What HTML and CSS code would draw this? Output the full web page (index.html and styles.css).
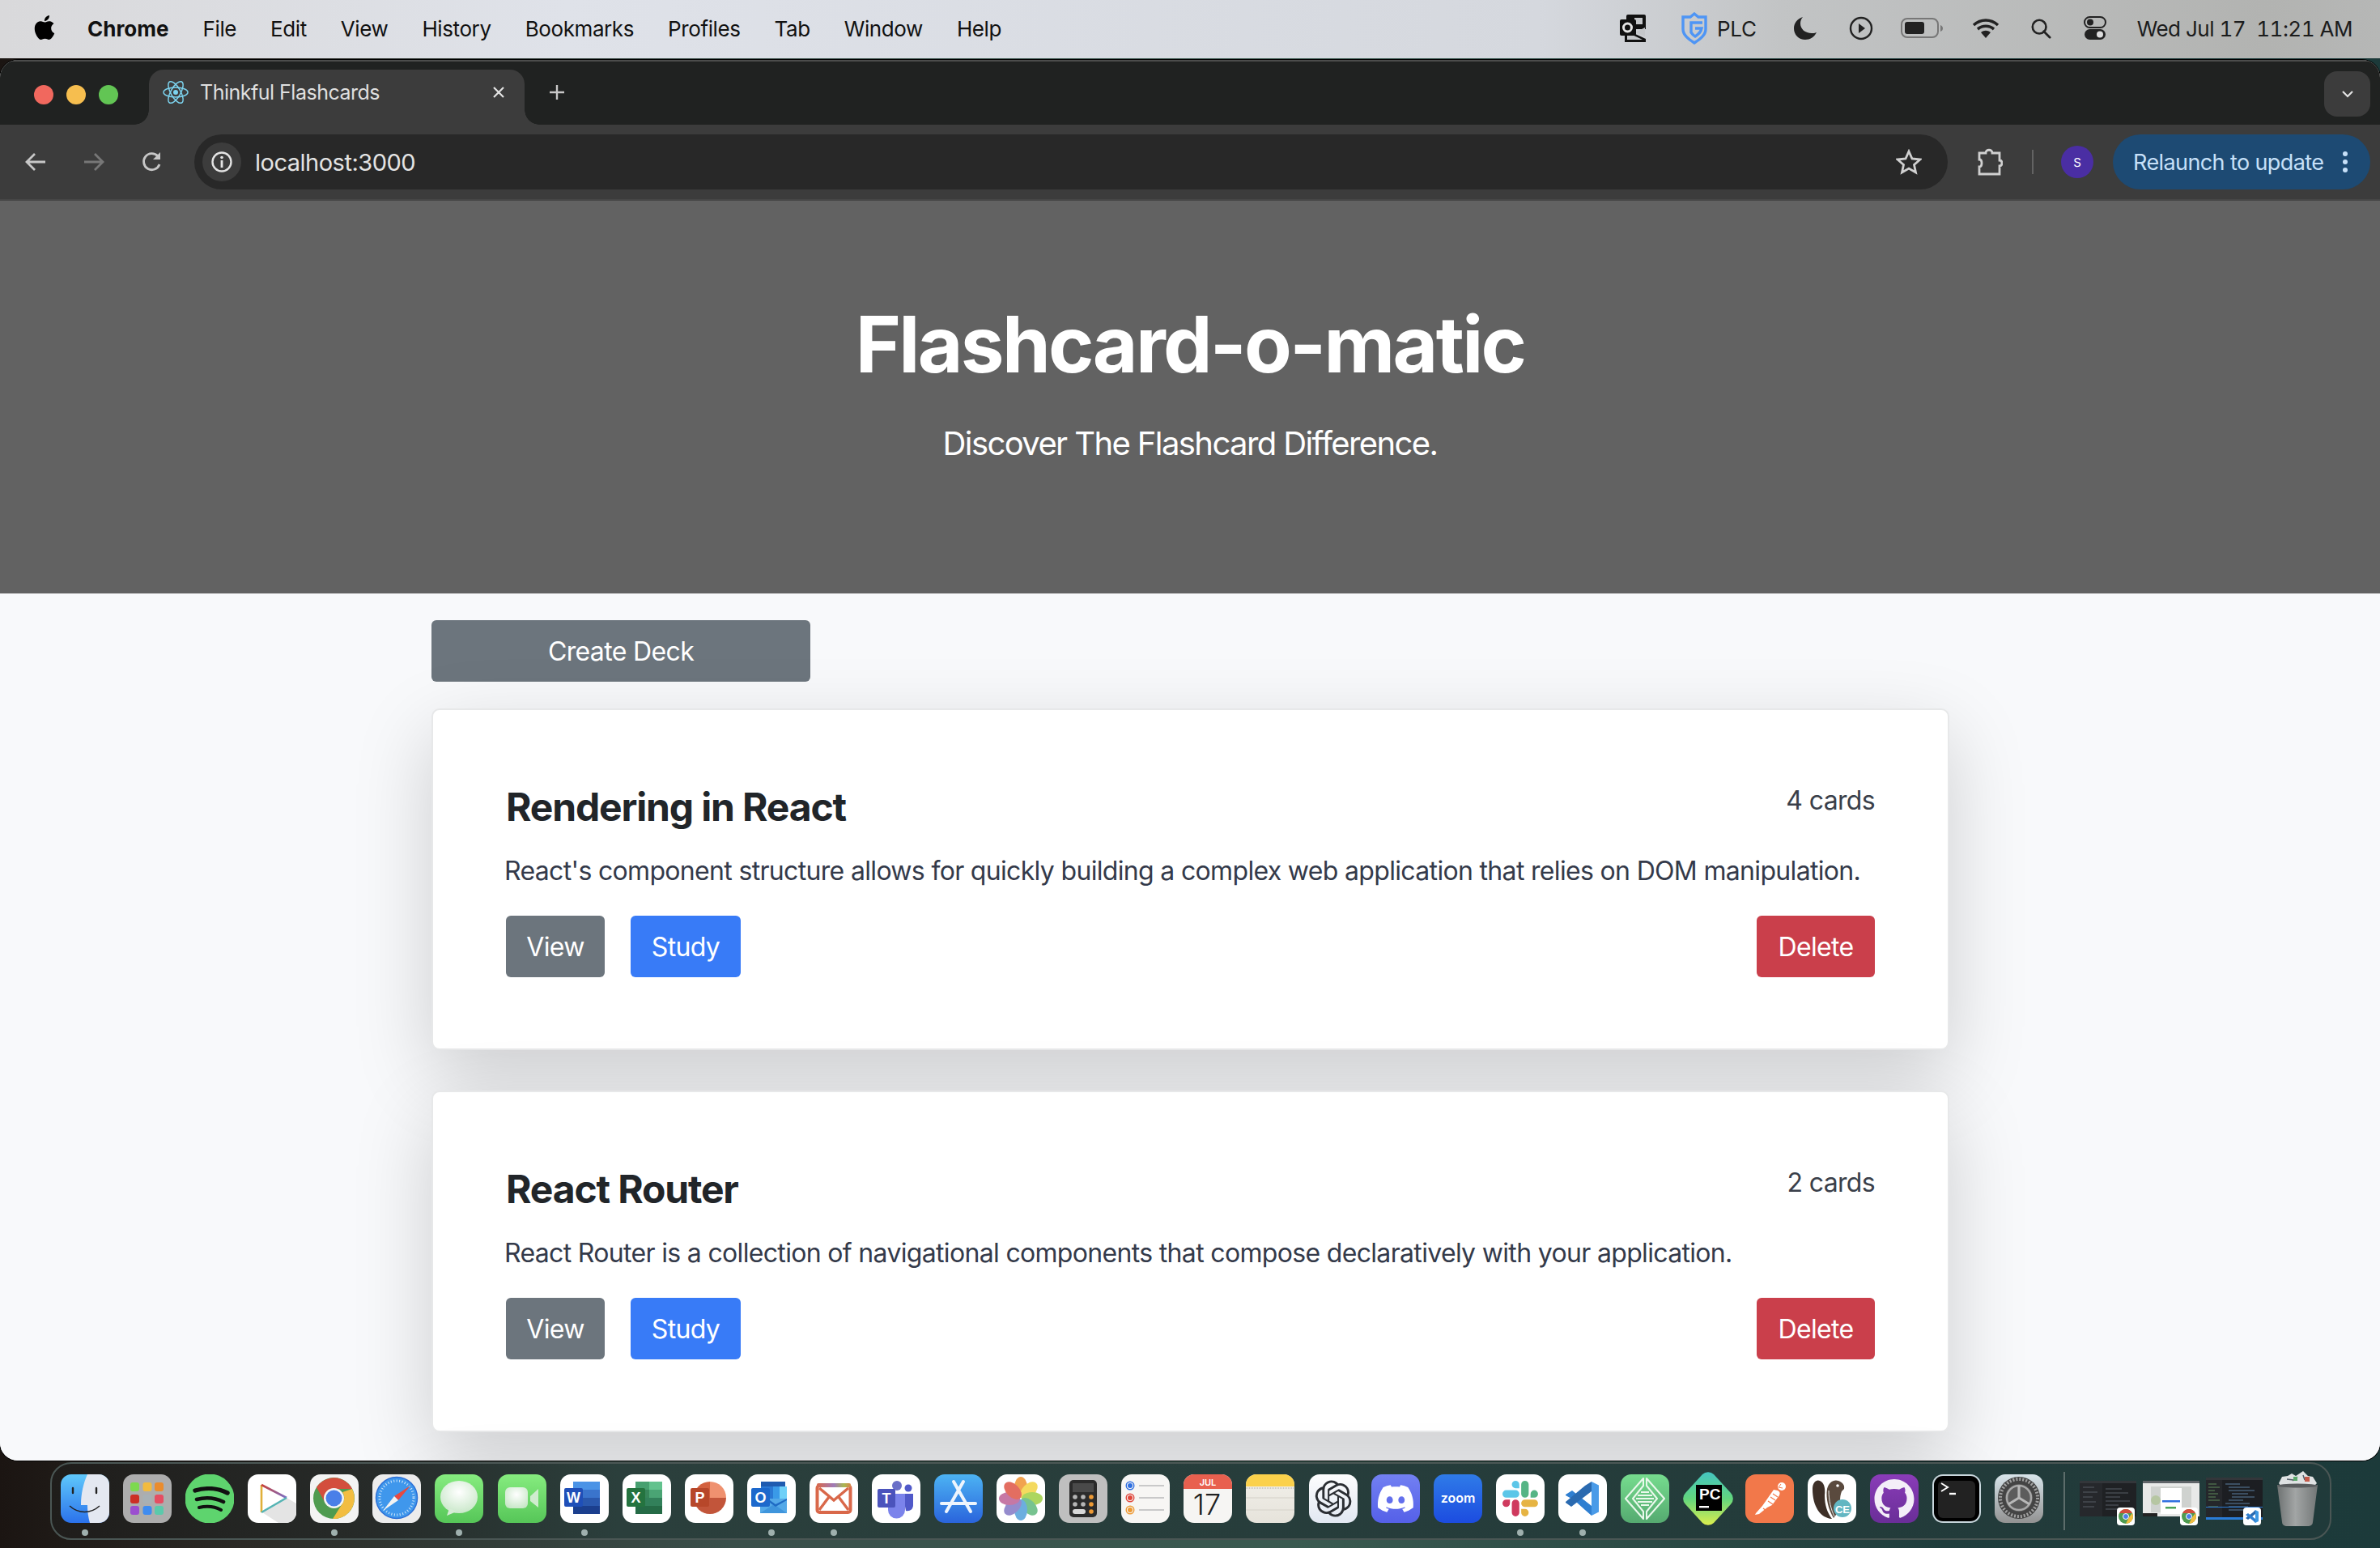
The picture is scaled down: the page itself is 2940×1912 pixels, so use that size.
FILE: index.html
```html
<!DOCTYPE html>
<html lang="en">
<head>
    <meta charset="UTF-8">
    <title>Thinkful Flashcards</title>
    <link rel="stylesheet" href="styles.css">
</head>
<body>
    <!-- macOS menu bar -->
    <header class="menubar">
        <svg class="apple" viewBox="0 0 24 24"><path d="M12.152 6.896c-.948 0-2.415-1.078-3.96-1.04-2.04.027-3.91 1.183-4.961 3.014-2.117 3.675-.546 9.103 1.519 12.09 1.013 1.454 2.208 3.09 3.792 3.039 1.52-.065 2.09-.987 3.935-.987 1.831 0 2.35.987 3.96.948 1.637-.026 2.676-1.48 3.676-2.948 1.156-1.688 1.636-3.325 1.662-3.415-.039-.013-3.182-1.221-3.22-4.857-.026-3.04 2.48-4.494 2.597-4.559-1.429-2.09-3.623-2.324-4.39-2.376-2-.156-3.675 1.09-4.61 1.09zM15.53 3.83c.843-1.012 1.4-2.427 1.245-3.83-1.207.052-2.662.805-3.532 1.818-.78.896-1.454 2.338-1.273 3.714 1.338.104 2.715-.688 3.559-1.701"/></svg>
        <nav class="menu-items">
            <strong>Chrome</strong>
            <span>File</span>
            <span>Edit</span>
            <span>View</span>
            <span>History</span>
            <span>Bookmarks</span>
            <span>Profiles</span>
            <span>Tab</span>
            <span>Window</span>
            <span>Help</span>
        </nav>
        <div class="status-items">
            <svg class="st st-outlook" viewBox="0 0 32 34"><path d="M8 2a2 2 0 0 1 2-2h20a2 2 0 0 1 2 2v16H8z" fill="#111"/><rect x="18" y="4" width="10" height="8" fill="#c5c7ca"/><path d="M6 18l26 12v4H6z" fill="#111"/><path d="M9 22l19 9H9zM31 16v11l-12-5z" fill="#c5c7ca"/><path d="M0 8a2 2 0 0 1 2-2h16a2 2 0 0 1 2 2v16a2 2 0 0 1-2 2H2a2 2 0 0 1-2-2z" fill="#111"/><circle cx="9.500" cy="16" r="5" fill="none" stroke="#e4e4e4" stroke-width="3"/></svg>
            <svg class="st st-shield" viewBox="0 0 32 40"><path d="M16 2l5 4h9v15c0 8-8 13-14 17C10 34 2 29 2 21V6h9z" fill="none" stroke="#4e95f5" stroke-width="3.400"/><path d="M26 13H12v12c2 3 3 4 5 5 4-3 7-5 8-10h-8" fill="none" stroke="#4e95f5" stroke-width="3.400"/></svg>
            <span class="st-plc">PLC</span>
            <svg class="st st-moon" viewBox="0 0 28 28"><path d="M11 0C4 2 0 8 0 14c0 8 6 14 14 14 6 0 11-3 14-9-2 1-4 1-6 1-8 0-14-5-14-12 0-3 1-6 3-8z" fill="#222"/></svg>
            <svg class="st st-play" viewBox="0 0 30 30"><circle cx="15" cy="15" r="13" fill="none" stroke="#222" stroke-width="2.400"/><path d="M12 9l8 6-8 6z" fill="#222"/></svg>
            <svg class="st st-battery" viewBox="0 0 52 26"><rect x="1" y="1" width="45" height="23" rx="7" fill="none" stroke="#777" stroke-width="2"/><rect x="5" y="5" width="24" height="15" rx="3" fill="#222"/><path d="M49 9c2 1 3 2 3 4s-1 3-3 4z" fill="#777"/></svg>
            <svg class="st st-wifi" viewBox="0 0 34 26"><path d="M2 9c9-8 21-8 30 0M7 14c6-5 14-5 20 0" fill="none" stroke="#222" stroke-width="3.600"/><path d="M11 18c4-3 8-3 12 0l-6 7z" fill="#222"/></svg>
            <svg class="st st-search" viewBox="0 0 28 28"><circle cx="12" cy="12" r="9" fill="none" stroke="#222" stroke-width="2.800"/><path d="M18 18l8 8" stroke="#222" stroke-width="3" stroke-linecap="round"/></svg>
            <svg class="st st-controls" viewBox="0 0 28 30"><rect x="1" y="1" width="26" height="13" rx="6.500" fill="none" stroke="#222" stroke-width="2"/><circle cx="8" cy="7.500" r="4" fill="#222"/><rect x="1" y="16" width="26" height="13" rx="6.500" fill="#222"/><circle cx="20" cy="22.500" r="4" fill="#ddd"/></svg>
            <span class="clock">Wed Jul 17&nbsp;&nbsp;11:21 AM</span>
        </div>
    </header>

    <div class="window">
        <!-- tab strip -->
        <div class="tabstrip">
            <div class="lights">
                <i class="light red"></i>
                <i class="light yellow"></i>
                <i class="light green"></i>
            </div>
            <div class="tab">
                <svg class="favicon" viewBox="0 0 32 32" fill="none" stroke="#7cd3ee" stroke-width="1.500"><ellipse cx="16" cy="16" rx="15" ry="6"/><ellipse cx="16" cy="16" rx="15" ry="6" transform="rotate(60 16 16)"/><ellipse cx="16" cy="16" rx="15" ry="6" transform="rotate(120 16 16)"/><circle cx="16" cy="16" r="3" fill="#7cd3ee" stroke="none"/></svg>
                <span class="tab-title">Thinkful Flashcards</span>
                <svg class="tab-close" viewBox="0 0 16 16"><path d="M2 2l12 12M14 2L2 14" stroke="#e3e3e3" stroke-width="2.200"/></svg>
            </div>
            <svg class="tab-new" viewBox="0 0 20 20"><path d="M10 1v18M1 10h18" stroke="#c8c8c8" stroke-width="2.400"/></svg>
            <div class="tab-search">
                <svg viewBox="0 0 16 10"><path d="M2 2l6 6 6-6" fill="none" stroke="#e3e3e3" stroke-width="2.200"/></svg>
            </div>
        </div>

        <!-- toolbar -->
        <div class="toolbar">
            <div class="nav-btn"><svg viewBox="0 0 28 28"><path d="M26 14H4M13 4L3 14l10 10" fill="none" stroke="#c7c7c7" stroke-width="2.800"/></svg></div>
            <div class="nav-btn"><svg viewBox="0 0 28 28"><path d="M2 14h22M15 4l10 10-10 10" fill="none" stroke="#777" stroke-width="2.800"/></svg></div>
            <div class="nav-btn"><svg viewBox="0 0 28 28"><path d="M23 17a10 10 0 1 1-2-10" fill="none" stroke="#c7c7c7" stroke-width="2.800"/><path d="M24 2v9h-9z" fill="#c7c7c7"/></svg></div>
            <div class="omnibox">
                <div class="site-chip">
                    <svg viewBox="0 0 28 28"><circle cx="14" cy="14" r="11.500" fill="none" stroke="#e3e3e3" stroke-width="2.400"/><path d="M14 12v9" stroke="#e3e3e3" stroke-width="2.800"/><circle cx="14" cy="8.500" r="1.800" fill="#e3e3e3"/></svg>
                </div>
                <span class="url">localhost:3000</span>
                <svg class="star" viewBox="0 0 32 32"><path d="M16 3l4 9 10 1-7.500 6.500L24.500 29 16 24l-8.500 5 2-9.500L2 13l10-1z" fill="none" stroke="#d0d0d0" stroke-width="2.800"/></svg>
            </div>
            <div class="ext-btn"><svg viewBox="0 0 32 34"><path d="M3 6h8c0-5 8-5 8 0h9v9c4 0 4 7 0 7v10H3v-9c4 0 4-9 0-9z" fill="none" stroke="#d0d0d0" stroke-width="2.800"/></svg></div>
            <i class="tool-sep"></i>
            <div class="avatar">S</div>
            <div class="relaunch">
                <span>Relaunch to update</span>
                <svg viewBox="0 0 8 28"><circle cx="4" cy="4" r="3" fill="#c7e0f8"/><circle cx="4" cy="14" r="3" fill="#c7e0f8"/><circle cx="4" cy="24" r="3" fill="#c7e0f8"/></svg>
            </div>
        </div>

        <!-- page content -->
        <main class="page">
            <section class="hero">
                <h1>Flashcard-o-matic</h1>
                <p>Discover The Flashcard Difference.</p>
            </section>
            <div class="container">
                <a class="btn btn-create">Create Deck</a>

                <article class="card">
                    <div class="card-top">
                        <h2>Rendering in React</h2>
                        <span class="count">4 cards</span>
                    </div>
                    <p>React's component structure allows for quickly building a complex web application that relies on DOM manipulation.</p>
                    <div class="card-actions">
                        <a class="btn btn-gray">View</a>
                        <a class="btn btn-blue">Study</a>
                        <a class="btn btn-red">Delete</a>
                    </div>
                </article>

                <article class="card">
                    <div class="card-top">
                        <h2>React Router</h2>
                        <span class="count">2 cards</span>
                    </div>
                    <p>React Router is a collection of navigational components that compose declaratively with your application.</p>
                    <div class="card-actions">
                        <a class="btn btn-gray">View</a>
                        <a class="btn btn-blue">Study</a>
                        <a class="btn btn-red">Delete</a>
                    </div>
                </article>

                <article class="card card-next"></article>
            </div>
        </main>
    </div>

    <!-- dock -->
    <footer class="dock">
        <div class="dock-item running">
            <svg viewBox="0 0 60 60"><defs><linearGradient id="finder" x1="0" y1="0" x2="0" y2="1"><stop offset="0" stop-color="#5fc8fb"/><stop offset="1" stop-color="#2b72ec"/></linearGradient></defs><rect width="60" height="60" rx="13" fill="url(#finder)"/><path d="M33 0h14a13 13 0 0 1 13 13v34a13 13 0 0 1-13 13H36c-2-7-3-14-3-22h-8c0-14 3-27 8-38z" fill="#e4e8f1"/><path d="M15 17v6M44 17v6" stroke="#222" stroke-width="2.400" stroke-linecap="round"/><path d="M11 39c11 10 26 10 37 0" fill="none" stroke="#222" stroke-width="1.500"/></svg>
        </div>
        <div class="dock-item">
            <svg viewBox="0 0 60 60"><rect width="60" height="60" rx="13" fill="#adadad"/><rect x="9" y="10" width="11" height="11" rx="3" fill="#7dd94f"/><rect x="24.500" y="10" width="11" height="11" rx="3" fill="#f2bb3f"/><rect x="39" y="10" width="11" height="11" rx="3" fill="#ea8c2d"/><rect x="9" y="25" width="11" height="11" rx="3" fill="#cc2f26"/><rect x="24.500" y="25" width="11" height="11" rx="3" fill="#a8b0b4"/><rect x="39" y="25" width="11" height="11" rx="3" fill="#e54d62"/><rect x="9" y="39" width="11" height="11" rx="3" fill="#9b4ecf"/><rect x="24.500" y="39" width="11" height="11" rx="3" fill="#3f8cf0"/><rect x="39" y="39" width="11" height="11" rx="3" fill="#5bc9ab"/></svg>
        </div>
        <div class="dock-item">
            <svg viewBox="0 0 60 60"><circle cx="30" cy="30" r="30.500" fill="#5ed46e"/><path d="M12 20c13-4 28-3 40 3" fill="none" stroke="#111" stroke-width="5.400" stroke-linecap="round"/><path d="M14 31c11-3 23-2 33 3" fill="none" stroke="#111" stroke-width="4.600" stroke-linecap="round"/><path d="M17 41c9-2 18-2 27 3" fill="none" stroke="#111" stroke-width="4" stroke-linecap="round"/></svg>
        </div>
        <div class="dock-item">
            <svg viewBox="0 0 60 60"><defs><linearGradient id="playTop" x1="0" y1="0" x2="1" y2="1"><stop offset="0" stop-color="#c8403a"/><stop offset="1" stop-color="#7a6fc8"/></linearGradient></defs><rect width="60" height="60" rx="13" fill="#fff"/><path d="M48 29l12 7v11a13 13 0 0 1-13 13H38L18 47z" fill="#e4e4e4"/><path d="M17 13v34" stroke="#e0b03a" stroke-width="2.600"/><path d="M17 13l31 16" stroke="url(#playTop)" stroke-width="2.600"/><path d="M48 29L17 47" stroke="#55b4b4" stroke-width="2.600"/></svg>
        </div>
        <div class="dock-item running">
            <svg viewBox="0 0 60 60"><rect width="60" height="60" rx="13" fill="#f3f3f3"/><circle cx="29.500" cy="29.500" r="25.500" fill="#4f9b50"/><path d="M8 16A25.500 25.500 0 0 1 52 18H30A12 12 0 0 0 19 36z" fill="#d34e3d"/><path d="M52 18A25.500 25.500 0 0 1 28 55L40 36A12 12 0 0 0 40 22z" fill="#f2bd41"/><circle cx="29.500" cy="29.500" r="12.500" fill="#f5f5f5"/><circle cx="29.500" cy="29.500" r="10" fill="#4a7fe8"/></svg>
        </div>
        <div class="dock-item">
            <svg viewBox="0 0 60 60"><rect width="60" height="60" rx="13" fill="#ececec"/><circle cx="30" cy="29" r="25.500" fill="#3f97ec" stroke="#2c6fd6" stroke-width="1.500"/><circle cx="30" cy="29" r="21" fill="none" stroke="#cfe6fb" stroke-width="3" stroke-dasharray="1 2.500"/><path d="M47 14L27 27l5 5z" fill="#e8483f"/><path d="M13 45l14-18 5 5z" fill="#f3f3f3"/></svg>
        </div>
        <div class="dock-item running">
            <svg viewBox="0 0 60 60"><defs><linearGradient id="msg" x1="0" y1="0" x2="0" y2="1"><stop offset="0" stop-color="#86ec7f"/><stop offset="1" stop-color="#56c658"/></linearGradient><radialGradient id="bubble" cx=".5" cy=".35" r=".7"><stop offset="0" stop-color="#fff"/><stop offset="1" stop-color="#c6e6c6"/></radialGradient></defs><rect width="60" height="60" rx="13" fill="url(#msg)"/><ellipse cx="30" cy="28" rx="23" ry="20" fill="url(#bubble)"/><path d="M18 42l-3 9 12-5z" fill="#d6ecd6"/></svg>
        </div>
        <div class="dock-item">
            <svg viewBox="0 0 60 60"><rect width="60" height="60" rx="13" fill="url(#msg)"/><rect x="9" y="16" width="28" height="26" rx="6" fill="url(#bubble)"/><path d="M40 27l10-9v23l-10-8z" fill="#cfeccf"/></svg>
        </div>
        <div class="dock-item running">
            <svg viewBox="0 0 60 60"><rect width="60" height="60" rx="13" fill="#fff"/><rect x="16" y="9" width="33" height="10" fill="#4a93e6"/><rect x="16" y="19" width="33" height="10" fill="#3a74cc"/><rect x="16" y="29" width="33" height="10" fill="#2a58ad"/><rect x="16" y="39" width="33" height="10" fill="#1b3f8e"/><rect x="5" y="17" width="23" height="23" rx="2" fill="#1f4fb8"/><text x="16.500" y="35" class="ico-letter">W</text></svg>
        </div>
        <div class="dock-item">
            <svg viewBox="0 0 60 60"><rect width="60" height="60" rx="13" fill="#fff"/><rect x="16" y="9" width="17" height="10" fill="#46a070"/><rect x="33" y="9" width="16" height="10" fill="#62c28d"/><rect x="16" y="19" width="17" height="10" fill="#37855a"/><rect x="33" y="19" width="16" height="10" fill="#4aa474"/><rect x="16" y="29" width="33" height="10" fill="#32805a"/><rect x="16" y="39" width="33" height="10" fill="#256b46"/><rect x="5" y="17" width="23" height="23" rx="2" fill="#24733f"/><text x="16.500" y="35" class="ico-letter">X</text></svg>
        </div>
        <div class="dock-item">
            <svg viewBox="0 0 60 60"><rect width="60" height="60" rx="13" fill="#fff"/><path d="M31 9a20 20 0 0 0-20 20h20z" fill="#d3603e"/><path d="M31 9a20 20 0 0 1 20 20H31z" fill="#ef916f"/><path d="M11 29h40a20 20 0 0 1-40 0z" fill="#c2553a"/><rect x="7" y="17" width="23" height="23" rx="2" fill="#b7472a"/><text x="18.500" y="35" class="ico-letter">P</text></svg>
        </div>
        <div class="dock-item running">
            <svg viewBox="0 0 60 60"><rect width="60" height="60" rx="13" fill="#fff"/><rect x="17" y="9" width="30" height="6" fill="#1f5bb0"/><rect x="17" y="15" width="15" height="15" fill="#2a78d4"/><rect x="32" y="15" width="8" height="15" fill="#3a9ae8"/><rect x="40" y="15" width="9" height="15" fill="#6fd0f8"/><rect x="16" y="30" width="33" height="18" fill="#54a9e8"/><path d="M16 48l17-11 16 11z" fill="#3f95dc"/><path d="M28 32l7 5 14-7v2l-14 8-7-5z" fill="#1f6bc4"/><rect x="5" y="17" width="23" height="23" rx="2" fill="#1c68cc"/><text x="16.500" y="35" class="ico-letter">O</text></svg>
        </div>
        <div class="dock-item running">
            <svg viewBox="0 0 60 60"><defs><linearGradient id="mailRim" x1="0" y1="0" x2="1" y2="0"><stop offset="0" stop-color="#d9684a"/><stop offset=".5" stop-color="#a07ab8"/><stop offset=".8" stop-color="#a8b84f"/><stop offset="1" stop-color="#d9844a"/></linearGradient></defs><rect width="60" height="60" rx="13" fill="#fff"/><rect x="9.500" y="14" width="41" height="33" rx="3" fill="#fff" stroke="#d9684a" stroke-width="4"/><path d="M9 13a2 2 0 0 1 2-2h38a2 2 0 0 1 2 2v3H9z" fill="url(#mailRim)"/><path d="M12 17l18 15 18-15M12 44l12-16M48 44L36 28" fill="none" stroke="#d9684a" stroke-width="3.400"/></svg>
        </div>
        <div class="dock-item">
            <svg viewBox="0 0 60 60"><rect width="60" height="60" rx="13" fill="#fff"/><circle cx="31" cy="14" r="6" fill="#6a6fc8"/><circle cx="45" cy="17" r="4.500" fill="#5059c9"/><path d="M38 24h13v14c0 5-4 8-9 7z" fill="#5059c9"/><path d="M20 24h21v20a10 10 0 0 1-21 0z" fill="#7b83eb"/><rect x="7" y="18" width="22" height="23" rx="2" fill="#4b53bc"/><text x="18" y="36" class="ico-letter">T</text></svg>
        </div>
        <div class="dock-item">
            <svg viewBox="0 0 60 60"><defs><linearGradient id="store" x1="0" y1="0" x2="0" y2="1"><stop offset="0" stop-color="#4cb3f3"/><stop offset="1" stop-color="#2a64dc"/></linearGradient></defs><rect width="60" height="60" rx="13" fill="url(#store)"/><path d="M36 9L15 46M24 9l21 37M9 36h42" stroke="#eef5fd" stroke-width="4" stroke-linecap="round"/></svg>
        </div>
        <div class="dock-item">
            <svg viewBox="0 0 60 60"><rect width="60" height="60" rx="13" fill="#fff"/><g opacity=".9"><ellipse cx="30" cy="16" rx="8" ry="13" fill="#f09a3e"/><ellipse cx="30" cy="16" rx="8" ry="13" fill="#f3d64e" transform="rotate(45 30 30)"/><ellipse cx="30" cy="16" rx="8" ry="13" fill="#a4d24f" transform="rotate(90 30 30)"/><ellipse cx="30" cy="16" rx="8" ry="13" fill="#69bd85" transform="rotate(135 30 30)"/><ellipse cx="30" cy="16" rx="8" ry="13" fill="#5da6dc" transform="rotate(180 30 30)"/><ellipse cx="30" cy="16" rx="8" ry="13" fill="#8a80c8" transform="rotate(225 30 30)"/><ellipse cx="30" cy="16" rx="8" ry="13" fill="#c06a9c" transform="rotate(270 30 30)"/><ellipse cx="30" cy="16" rx="8" ry="13" fill="#e05f50" transform="rotate(315 30 30)"/></g></svg>
        </div>
        <div class="dock-item">
            <svg viewBox="0 0 60 60"><rect width="60" height="60" rx="13" fill="#bfbfbf"/><rect x="13" y="7" width="34" height="46" rx="5" fill="#2b2b2b"/><rect x="17" y="11" width="26" height="11" fill="#4a4a4a"/><g fill="#b5b5b5"><circle cx="20" cy="28" r="2.800"/><circle cx="30" cy="28" r="2.800"/><circle cx="20" cy="37" r="2.800"/><circle cx="30" cy="37" r="2.800"/></g><g fill="#ee9a35"><circle cx="40" cy="28" r="2.800"/><circle cx="40" cy="37" r="2.800"/><circle cx="40" cy="46" r="2.800"/></g><rect x="17" y="43" width="16" height="6" rx="3" fill="#d8d8d8"/></svg>
        </div>
        <div class="dock-item">
            <svg viewBox="0 0 60 60"><rect width="60" height="60" rx="13" fill="#f7f6f4"/><circle cx="11" cy="14" r="4.800" fill="none" stroke="#2f6fe0" stroke-width="1.400"/><circle cx="11" cy="14" r="3" fill="#2f6fe0"/><circle cx="11" cy="29" r="4.800" fill="none" stroke="#e0473c" stroke-width="1.400"/><circle cx="11" cy="29" r="3" fill="#e0473c"/><circle cx="11" cy="44" r="4.800" fill="none" stroke="#ee9a35" stroke-width="1.400"/><circle cx="11" cy="44" r="3" fill="#ee9a35"/><path d="M22 14h31M22 29h31M22 44h31" stroke="#c9c9c9" stroke-width="1.800"/></svg>
        </div>
        <div class="dock-item">
            <svg viewBox="0 0 60 60"><rect width="60" height="60" rx="13" fill="#f6f5f3"/><path d="M0 18V13A13 13 0 0 1 13 0h34a13 13 0 0 1 13 13v5z" fill="#e8604f"/><text x="30" y="14" class="ico-month">JUL</text><text x="29" y="50" class="ico-day">17</text></svg>
        </div>
        <div class="dock-item">
            <svg viewBox="0 0 60 60"><defs><linearGradient id="notes" x1="0" y1="0" x2="0" y2="1"><stop offset="0" stop-color="#f2f0ea"/><stop offset="1" stop-color="#e6e3db"/></linearGradient></defs><rect width="60" height="60" rx="13" fill="url(#notes)"/><path d="M0 15V13A13 13 0 0 1 13 0h34a13 13 0 0 1 13 13v2z" fill="#fbd14b"/><path d="M0 17h60" stroke="#aaa79f" stroke-width="1.200" stroke-dasharray="1 1"/><path d="M0 29h60M0 44h60" stroke="#dcd9d1" stroke-width="1.500"/></svg>
        </div>
        <div class="dock-item">
            <svg viewBox="0 0 60 60"><defs><linearGradient id="gpt" x1="0" y1="0" x2="0" y2="1"><stop offset="0" stop-color="#fdfdfe"/><stop offset="1" stop-color="#e2e8f2"/></linearGradient></defs><rect width="60" height="60" rx="13" fill="url(#gpt)"/><g transform="translate(7.500 7.500) scale(1.880)"><path fill="#2b2e33" d="M22.2819 9.8211a5.9847 5.9847 0 0 0-.5157-4.9108 6.0462 6.0462 0 0 0-6.5098-2.9A6.0651 6.0651 0 0 0 4.9807 4.1818a5.9847 5.9847 0 0 0-3.9977 2.9 6.0462 6.0462 0 0 0 .7427 7.0966 5.98 5.98 0 0 0 .511 4.9107 6.051 6.051 0 0 0 6.5146 2.9001A5.9847 5.9847 0 0 0 13.2599 24a6.0557 6.0557 0 0 0 5.7718-4.2058 5.9894 5.9894 0 0 0 3.9977-2.9001 6.0557 6.0557 0 0 0-.7475-7.0729zm-9.022 12.6081a4.4755 4.4755 0 0 1-2.8764-1.0408l.1419-.0804 4.7783-2.7582a.7948.7948 0 0 0 .3927-.6813v-6.7369l2.02 1.1686a.071.071 0 0 1 .038.052v5.5826a4.504 4.504 0 0 1-4.4945 4.4944zm-9.6607-4.1254a4.4708 4.4708 0 0 1-.5346-3.0137l.142.0852 4.783 2.7582a.7712.7712 0 0 0 .7806 0l5.8428-3.3685v2.3324a.0804.0804 0 0 1-.0332.0615L9.74 19.9502a4.4992 4.4992 0 0 1-6.1408-1.6464zM2.3408 7.8956a4.485 4.485 0 0 1 2.3655-1.9728V11.6a.7664.7664 0 0 0 .3879.6765l5.8144 3.3543-2.0201 1.1685a.0757.0757 0 0 1-.071 0l-4.8303-2.7865A4.504 4.504 0 0 1 2.3408 7.872zm16.5963 3.8558L13.1038 8.364 15.1192 7.2a.0757.0757 0 0 1 .071 0l4.8303 2.7913a4.4944 4.4944 0 0 1-.6765 8.1042v-5.6772a.79.79 0 0 0-.407-.667zm2.0107-3.0231l-.142-.0852-4.7735-2.7818a.7759.7759 0 0 0-.7854 0L9.409 9.2297V6.8974a.0662.0662 0 0 1 .0284-.0615l4.8303-2.7866a4.4992 4.4992 0 0 1 6.6802 4.66zM8.3065 12.863l-2.02-1.1638a.0804.0804 0 0 1-.038-.0567V6.0742a4.4992 4.4992 0 0 1 7.3757-3.4537l-.142.0805L8.704 5.459a.7948.7948 0 0 0-.3927.6813zm1.0976-2.3654l2.602-1.4998 2.6069 1.4998v2.9994l-2.5974 1.4997-2.6067-1.4997Z"/></g></svg>
        </div>
        <div class="dock-item">
            <svg viewBox="0 0 60 60"><defs><linearGradient id="discord" x1="0" y1="0" x2="0" y2="1"><stop offset="0" stop-color="#7280f2"/><stop offset="1" stop-color="#5560e8"/></linearGradient></defs><rect width="60" height="60" rx="13" fill="url(#discord)"/><g transform="translate(8 8) scale(1.830)"><path fill="#fff" d="M20.317 4.3698a19.7913 19.7913 0 00-4.8851-1.5152.0741.0741 0 00-.0785.0371c-.211.3753-.4447.8648-.6083 1.2495-1.8447-.2762-3.68-.2762-5.4868 0-.1636-.3933-.4058-.8742-.6177-1.2495a.077.077 0 00-.0785-.037 19.7363 19.7363 0 00-4.8852 1.515.0699.0699 0 00-.0321.0277C.5334 9.0458-.319 13.5799.0992 18.0578a.0824.0824 0 00.0312.0561c2.0528 1.5076 4.0413 2.4228 5.9929 3.0294a.0777.0777 0 00.0842-.0276c.4616-.6304.8731-1.2952 1.226-1.9942a.076.076 0 00-.0416-.1057c-.6528-.2476-1.2743-.5495-1.8722-.8923a.077.077 0 01-.0076-.1277c.1258-.0943.2517-.1923.3718-.2914a.0743.0743 0 01.0776-.0105c3.9278 1.7933 8.18 1.7933 12.0614 0a.0739.0739 0 01.0785.0095c.1202.099.246.1981.3728.2924a.077.077 0 01-.0066.1276 12.2986 12.2986 0 01-1.873.8914.0766.0766 0 00-.0407.1067c.3604.698.7719 1.3628 1.225 1.9932a.076.076 0 00.0842.0286c1.961-.6067 3.9495-1.5219 6.0023-3.0294a.077.077 0 00.0313-.0552c.5004-5.177-.8382-9.6739-3.5485-13.6604a.061.061 0 00-.0312-.0286zM8.02 15.3312c-1.1825 0-2.1569-1.0857-2.1569-2.419 0-1.3332.9555-2.4189 2.157-2.4189 1.2108 0 2.1757 1.0952 2.1568 2.419 0 1.3332-.9555 2.4189-2.1569 2.4189zm7.9748 0c-1.1825 0-2.1569-1.0857-2.1569-2.419 0-1.3332.9554-2.4189 2.1569-2.4189 1.2108 0 2.1757 1.0952 2.1568 2.419 0 1.3332-.946 2.4189-2.1568 2.4189Z"/></g></svg>
        </div>
        <div class="dock-item">
            <svg viewBox="0 0 60 60"><defs><linearGradient id="zoomBg" x1="0" y1="0" x2="0" y2="1"><stop offset="0" stop-color="#2f7be8"/><stop offset="1" stop-color="#1c4ce0"/></linearGradient></defs><rect width="60" height="60" rx="13" fill="url(#zoomBg)"/><text x="30" y="35" class="ico-zoom">zoom</text></svg>
        </div>
        <div class="dock-item running">
            <svg viewBox="0 0 60 60"><rect width="60" height="60" rx="13" fill="#fff"/><g transform="translate(8 8) scale(1.830)"><path fill="#cf3a5e" d="M5.042 15.165a2.528 2.528 0 0 1-2.52 2.523A2.528 2.528 0 0 1 0 15.165a2.527 2.527 0 0 1 2.522-2.52h2.52v2.52zM6.313 15.165a2.527 2.527 0 0 1 2.521-2.52 2.527 2.527 0 0 1 2.521 2.52v6.313A2.528 2.528 0 0 1 8.834 24a2.528 2.528 0 0 1-2.521-2.522v-6.313z"/><path fill="#5cc6e8" d="M8.834 5.042a2.528 2.528 0 0 1-2.521-2.52A2.528 2.528 0 0 1 8.834 0a2.528 2.528 0 0 1 2.521 2.522v2.52H8.834zM8.834 6.313a2.528 2.528 0 0 1 2.521 2.521 2.528 2.528 0 0 1-2.521 2.521H2.522A2.528 2.528 0 0 1 0 8.834a2.528 2.528 0 0 1 2.522-2.521h6.312z"/><path fill="#55b585" d="M18.956 8.834a2.528 2.528 0 0 1 2.522-2.521A2.528 2.528 0 0 1 24 8.834a2.528 2.528 0 0 1-2.522 2.521h-2.522V8.834zM17.688 8.834a2.528 2.528 0 0 1-2.523 2.521 2.527 2.527 0 0 1-2.52-2.521V2.522A2.527 2.527 0 0 1 15.165 0a2.528 2.528 0 0 1 2.523 2.522v6.312z"/><path fill="#e6b443" d="M15.165 18.956a2.528 2.528 0 0 1 2.523 2.522A2.528 2.528 0 0 1 15.165 24a2.527 2.527 0 0 1-2.52-2.522v-2.522h2.52zM15.165 17.688a2.527 2.527 0 0 1-2.52-2.523 2.526 2.526 0 0 1 2.52-2.52h6.313A2.527 2.527 0 0 1 24 15.165a2.528 2.528 0 0 1-2.522 2.523h-6.313z"/></g></svg>
        </div>
        <div class="dock-item running">
            <svg viewBox="0 0 60 60"><rect width="60" height="60" rx="13" fill="#fff"/><path d="M41 9l9 4.500v33L41 51z" fill="#4a9be8"/><path d="M41 51V39L17 20l-8 5v1l9 5 5 4 10 9z" fill="#2f7fd1" /><path d="M41 9v12L16 40l-7-5v-1L33 14z" fill="#2a6ab0"/></svg>
        </div>
        <div class="dock-item">
            <svg viewBox="0 0 60 60"><defs><linearGradient id="bruno" x1="0" y1="0" x2="0" y2="1"><stop offset="0" stop-color="#76dc8e"/><stop offset="1" stop-color="#55aa70"/></linearGradient></defs><rect width="60" height="60" rx="13" fill="url(#bruno)"/><path d="M28 5L6 30l22 25V46L15 30 28 14zM32 5l22 25-22 25V46l13-16-13-16z" fill="none" stroke="#eaf8ec" stroke-width="2" stroke-linejoin="round"/><path d="M25 22h10M21 26h18M19 30h22M21 34h18M25 38h10" stroke="#eaf8ec" stroke-width="2"/></svg>
        </div>
        <div class="dock-item">
            <svg viewBox="0 0 60 60" class="overflow"><defs><linearGradient id="pycharm" x1="0" y1="0" x2="0" y2="1"><stop offset="0" stop-color="#44c4c0"/><stop offset=".5" stop-color="#62d67e"/><stop offset="1" stop-color="#dcee4e"/></linearGradient></defs><path d="M24 0a10 10 0 0 1 14 0l21 23a10 10 0 0 1 0 14L38 60a10 10 0 0 1-14 0L3 37a10 10 0 0 1 0-14z" fill="url(#pycharm)"/><rect x="16" y="13" width="32" height="32" fill="#000"/><text x="20" y="31" class="ico-pc">PC</text><rect x="20" y="39" width="12" height="2.400" fill="#fff"/></svg>
        </div>
        <div class="dock-item">
            <svg viewBox="0 0 60 60"><rect width="60" height="60" rx="13" fill="#f2784a"/><path d="M40 20c3 2 3 3 2 6l-9 12-6 3-10 8-5 1 1-2 8-9 7-10 7-10z" fill="#fff"/><circle cx="45" cy="15" r="5" fill="#fff"/><path d="M44 12l-3 4 5 1" fill="none" stroke="#f2784a" stroke-width="1"/><path d="M28 33l6 4M31 28l6 4M34 24l6 4M22 42l4 3" stroke="#f2784a" stroke-width="1.200"/></svg>
        </div>
        <div class="dock-item">
            <svg viewBox="0 0 60 60"><rect width="60" height="60" rx="13" fill="#fff"/><path d="M6 18c0-8 5-12 9-10 5 2 7 8 6 18 0 12 3 21 9 29C16 54 6 40 6 18z" fill="#3d2f27"/><path d="M24 18c2-8 8-12 14-10 5 2 8 5 7 10l-3 3c-3 8-2 14 0 20L32 54c-6-10-10-24-8-36z" fill="#5a4a3e"/><path d="M26 20c0 12 3 24 7 32" fill="none" stroke="#eee" stroke-width="1"/><circle cx="37" cy="14" r="1.800" fill="#fff"/><circle cx="43" cy="42" r="11" fill="#63b6c2"/><text x="43" y="47.500" class="ico-ce">CE</text></svg>
        </div>
        <div class="dock-item">
            <svg viewBox="0 0 60 60"><defs><linearGradient id="ghBg" x1="0" y1="0" x2="0" y2="1"><stop offset="0" stop-color="#8a3cb8"/><stop offset="1" stop-color="#6a2e98"/></linearGradient></defs><rect width="60" height="60" rx="13" fill="url(#ghBg)"/><g transform="translate(5.500 5.500) scale(2.040)"><path fill="#f4eef8" d="M12 .297c-6.63 0-12 5.373-12 12 0 5.303 3.438 9.8 8.205 11.385.6.113.82-.258.82-.577 0-.285-.01-1.04-.015-2.04-3.338.724-4.042-1.61-4.042-1.61C4.422 18.07 3.633 17.7 3.633 17.7c-1.087-.744.084-.729.084-.729 1.205.084 1.838 1.236 1.838 1.236 1.07 1.835 2.809 1.305 3.495.998.108-.776.417-1.305.76-1.605-2.665-.3-5.466-1.332-5.466-5.93 0-1.31.465-2.38 1.235-3.22-.135-.303-.54-1.523.105-3.176 0 0 1.005-.322 3.3 1.23.96-.267 1.98-.399 3-.405 1.02.006 2.04.138 3 .405 2.28-1.552 3.285-1.23 3.285-1.23.645 1.653.24 2.873.12 3.176.765.84 1.23 1.91 1.23 3.22 0 4.61-2.805 5.625-5.475 5.92.42.36.81 1.096.81 2.22 0 1.606-.015 2.896-.03 3.286 0 .315.21.69.825.57C20.565 22.092 24 17.592 24 12.297c0-6.627-5.373-12-12-12"/></g></svg>
        </div>
        <div class="dock-item">
            <svg viewBox="0 0 60 60"><rect width="60" height="60" rx="13" fill="#c8d6dc"/><rect x="2" y="2" width="56" height="56" rx="11" fill="#000"/><rect x="7" y="8" width="46" height="46" rx="6" fill="#222"/><path d="M11 11l8 5-8 5" fill="none" stroke="#fff" stroke-width="2"/><path d="M21 24h8" stroke="#fff" stroke-width="2.400"/></svg>
        </div>
        <div class="dock-item">
            <svg viewBox="0 0 60 60"><defs><linearGradient id="gear" x1="0" y1="0" x2="0" y2="1"><stop offset="0" stop-color="#d8e4ea"/><stop offset="1" stop-color="#929292"/></linearGradient></defs><rect width="60" height="60" rx="13" fill="url(#gear)"/><circle cx="30" cy="29" r="26" fill="#444"/><circle cx="30" cy="29" r="23" fill="none" stroke="#a2a2a2" stroke-width="4" stroke-dasharray="2 2"/><circle cx="30" cy="29" r="17" fill="#5c5c5c"/><circle cx="30" cy="29" r="15" fill="none" stroke="#a8a8a8" stroke-width="2.500"/><path d="M30 29V14M30 29L17 37M30 29l13 8" stroke="#b8b8b8" stroke-width="3.200"/></svg>
        </div>
        <i class="dock-sep"></i>
        <div class="dock-thumb">
            <svg viewBox="0 0 70 52" class="thumb"><rect y="4" width="70" height="44" fill="#1f2124"/><rect y="4" width="70" height="3" fill="#33363a"/><rect y="7" width="28" height="41" fill="#26282c"/><path d="M4 12h14M4 18h18M4 24h12M4 30h16M4 36h14M32 14h20M32 19h28M32 24h18M32 29h30M32 34h16M32 39h22" stroke="#565c64" stroke-width="1"/></svg>
            <svg class="badge" viewBox="0 0 22 22"><rect width="22" height="22" rx="4" fill="#fff"/><circle cx="11" cy="11" r="9" fill="#4f9b50"/><path d="M3 7a9 9 0 0 1 16 0H11z" fill="#d34e3d"/><path d="M19 7a9 9 0 0 1-8 13l4-8z" fill="#f2bd41"/><circle cx="11" cy="11" r="3.500" fill="#4a7fe8" stroke="#fff"/></svg>
        </div>
        <div class="dock-thumb">
            <svg viewBox="0 0 70 52" class="thumb"><rect y="4" width="70" height="44" fill="#e8e9e8"/><rect y="4" width="70" height="3" fill="#5f6468"/><rect x="10" y="11" width="50" height="32" fill="#cfd2cf"/><rect x="22" y="13" width="26" height="32" fill="#fff"/><rect x="24" y="28" width="22" height="2.500" fill="#2f6fe0"/><rect x="28" y="36" width="13" height="2.500" fill="#4ba35a"/><rect y="44" width="18" height="4" fill="#222"/><circle cx="16" cy="28" r="6" fill="#b6c6a2"/></svg>
            <svg class="badge" viewBox="0 0 22 22"><rect width="22" height="22" rx="4" fill="#fff"/><circle cx="11" cy="11" r="9" fill="#4f9b50"/><path d="M3 7a9 9 0 0 1 16 0H11z" fill="#d34e3d"/><path d="M19 7a9 9 0 0 1-8 13l4-8z" fill="#f2bd41"/><circle cx="11" cy="11" r="3.500" fill="#4a7fe8" stroke="#fff"/></svg>
        </div>
        <div class="dock-thumb">
            <svg viewBox="0 0 70 52" class="thumb"><rect width="70" height="52" fill="#1c1e22"/><rect width="70" height="3" fill="#33363a"/><rect y="3" width="20" height="46" fill="#25272b"/><path d="M3 8h10M3 12h14M3 16h8M3 20h12M3 24h9M3 28h14M3 36h12" stroke="#5f8a5a" stroke-width="1"/><path d="M24 8h18M28 12h26M28 16h32M32 20h20M32 24h28M28 28h18M24 32h30M28 36h24M28 40h34" stroke="#5b7fa0" stroke-width="1"/><rect y="36" width="70" height="1" fill="#2a7bd6"/><rect y="49" width="70" height="3" fill="#2a7bd6"/></svg>
            <svg class="badge" viewBox="0 0 22 22"><rect width="22" height="22" rx="4" fill="#fff"/><path d="M15 3l4 2v12l-4 2z" fill="#3d98e2"/><path d="M15 3v5L6 15l-3-2 9-7z" fill="#2a6ab0"/><path d="M15 19v-5L6 7 3 9l9 7z" fill="#2f7fd1"/></svg>
        </div>
        <div class="dock-trash">
            <svg viewBox="0 0 54 70"><defs><linearGradient id="can" x1="0" y1="0" x2="1" y2="0"><stop offset="0" stop-color="#6e7272"/><stop offset=".45" stop-color="#a2a5a5"/><stop offset="1" stop-color="#727676"/></linearGradient></defs><path d="M2 19h50l-6 46a5 5 0 0 1-5 5H13a5 5 0 0 1-5-5z" fill="url(#can)"/><path d="M4 17l4-8 7-1 5-3 5 3 9-6 6 6 6 1 5 8-3 3H6z" fill="#dfe2e3"/><path d="M14 12l8 1M21 14l6-5M34 7l2 6" stroke="#555f6a" stroke-width="1.500" fill="none"/><path d="M22 9h5v5h-5z" fill="#5aa86a"/><path d="M36 9h6v6h-6z" fill="#c45a4a"/><ellipse cx="27" cy="20" rx="25" ry="2.500" fill="#5a5d5f"/></svg>
        </div>
    </footer>
</body>
</html>
```

FILE: styles.css
```css
* {
    box-sizing: border-box;
}

html, body {
    margin: 0;
    height: 1912px;
    overflow: hidden;
}

body {
    display: flex;
    flex-direction: column;
    font-family: Inter, "Liberation Sans", sans-serif;
    background: linear-gradient(90deg, #1b1512 0, #2b2a26 300px, #3a4f4a 900px, #3a5a50 1600px, #1f3d3c 2400px, #1c3a3a 100%);
}

svg {
    display: block;
    flex: none;
}

/* menu bar */
.menubar {
    display: flex;
    align-items: center;
    height: 72px;
    padding: 0 0 2px 40px;
    color: #111;
    font-size: 26px;
    background: linear-gradient(90deg, #d9d9db 0, #dfe2e9 700px, #d5d8de 1900px, #c2c4c5 2200px, #b2b3b1 2800px, #b6b7b6 100%);
}

.apple {
    width: 30px;
    height: 32px;
    margin-bottom: 2px;
}

.menu-items {
    display: flex;
    gap: 42px;
    margin-left: 38px;
    letter-spacing: -0.4px;
}

.menu-items strong {
    font-weight: 700;
    letter-spacing: 0;
}

.status-items {
    display: flex;
    align-items: center;
    margin-left: auto;
    margin-right: 34px;
    color: #1c1c1c;
}

.st {
    height: 30px;
}

.st-outlook { width: 32px; height: 34px; margin-right: 44px; }
.st-shield { width: 32px; height: 40px; margin-right: 12px; }
.st-plc { margin-right: 46px; letter-spacing: -0.3px; }
.st-moon { width: 28px; height: 28px; margin-right: 40px; }
.st-play { width: 30px; margin-right: 34px; }
.st-battery { width: 52px; height: 26px; margin-right: 36px; }
.st-wifi { width: 34px; height: 26px; margin-right: 38px; }
.st-search { width: 26px; height: 28px; margin-right: 40px; }
.st-controls { width: 28px; margin-right: 38px; }

.clock {
    font-variant-numeric: tabular-nums;
    letter-spacing: -0.5px;
}

/* browser window */
.window {
    display: flex;
    flex-direction: column;
    height: 1730px;
    margin-top: 2px;
    overflow: hidden;
    border-radius: 22px;
    background: #fff;
    box-shadow: 0 0 0 1px #000;
}

.tabstrip {
    display: flex;
    align-items: flex-start;
    flex: none;
    height: 80px;
    padding: 12px 12px 0 0;
    background: #202221;
    border-top: 2px solid #4c4d4c;
}

.lights {
    display: flex;
    gap: 16px;
    width: 184px;
    padding: 17px 0 0 42px;
}

.light {
    width: 24px;
    height: 24px;
    border-radius: 50%;
}

.red { background: #f1685e; }
.yellow { background: #f6be4f; }
.green { background: #62c554; }

.tab {
    position: relative;
    display: flex;
    align-items: center;
    width: 464px;
    height: 68px;
    margin-top: -2px;
    padding: 0 24px 12px 17px;
    background: #3c3c3c;
    border-radius: 18px 18px 0 0;
    color: #dfdfdf;
    font-size: 25px;
}

.tab::before,
.tab::after {
    content: "";
    position: absolute;
    bottom: 0;
    width: 18px;
    height: 18px;
}

.tab::before {
    left: -18px;
    background: radial-gradient(circle at 0 0, #202221 17.500px, #3c3c3c 18px);
}

.tab::after {
    right: -18px;
    background: radial-gradient(circle at 100% 0, #202221 17.500px, #3c3c3c 18px);
}

.favicon {
    width: 32px;
    height: 32px;
}

.tab-title {
    margin-left: 14px;
    letter-spacing: -0.5px;
}

.tab-close {
    width: 16px;
    height: 16px;
    margin-left: auto;
}

.tab-new {
    width: 20px;
    height: 20px;
    margin: 16px 0 0 30px;
}

.tab-search {
    display: flex;
    align-items: center;
    justify-content: center;
    width: 57px;
    height: 56px;
    margin-left: auto;
    background: #3c3c3c;
    border-radius: 16px;
}

.tab-search svg {
    width: 16px;
    height: 10px;
}

.toolbar {
    display: flex;
    align-items: center;
    flex: none;
    height: 94px;
    padding: 0 12px 0 8px;
    background: #3c3c3c;
    border-bottom: 2px solid #474747;
}

.nav-btn {
    display: flex;
    justify-content: center;
    width: 72px;
}

.nav-btn svg {
    width: 28px;
    height: 28px;
}

.omnibox {
    display: flex;
    align-items: center;
    flex: 1;
    height: 68px;
    margin-left: 16px;
    padding: 0 32px 0 10px;
    background: #282828;
    border-radius: 34px;
}

.site-chip {
    display: flex;
    align-items: center;
    justify-content: center;
    width: 48px;
    height: 48px;
    background: #3c3c3c;
    border-radius: 50%;
}

.site-chip svg {
    width: 28px;
    height: 28px;
}

.url {
    margin-left: 17px;
    color: #e3e3e3;
    font-size: 29px;
    letter-spacing: -0.5px;
}

.star {
    width: 32px;
    height: 32px;
    margin-left: auto;
}

.ext-btn {
    display: flex;
    justify-content: center;
    width: 104px;
}

.ext-btn svg {
    width: 32px;
    height: 34px;
}

.tool-sep {
    width: 2px;
    height: 30px;
    background: #636363;
}

.avatar {
    display: flex;
    align-items: center;
    justify-content: center;
    width: 40px;
    height: 40px;
    margin-left: 34px;
    background: #4a2ea3;
    border-radius: 50%;
    color: #fff;
    font-size: 15px;
}

.relaunch {
    display: flex;
    align-items: center;
    width: 318px;
    height: 68px;
    margin-left: 24px;
    padding-left: 25px;
    background: #1d4a73;
    border-radius: 34px;
    color: #c7e0f8;
    font-size: 27px;
    letter-spacing: -0.6px;
}

.relaunch svg {
    width: 8px;
    height: 28px;
    margin-left: 23px;
}

/* flashcard app */
.page {
    flex: 1;
    overflow: hidden;
    background: #f8f9fb;
}

.hero {
    height: 485px;
    padding-top: 128px;
    background: #626262;
    color: #fff;
    text-align: center;
}

.hero h1 {
    margin: 0;
    font-size: 96px;
    line-height: 98px;
    font-weight: 700;
    letter-spacing: -2.650px;
}

.hero p {
    margin: 50px 0 0;
    font-size: 40px;
    line-height: 48px;
    letter-spacing: -1.600px;
}

.container {
    display: flex;
    flex-direction: column;
    align-items: flex-start;
    width: 1875px;
    margin: 33px 0 0 533px;
}

.btn {
    display: inline-flex;
    align-items: center;
    justify-content: center;
    height: 76px;
    border-radius: 6px;
    color: #fff;
    font-size: 32px;
    letter-spacing: -0.650px;
}

.btn-create {
    width: 468px;
    background: #6c757d;
}

.card {
    flex: none;
    width: 100%;
    height: 422px;
    margin-top: 33px;
    padding: 90px 90px 0 90px;
    background: #fff;
    border: 2px solid #e7e8e9;
    border-radius: 10px;
    box-shadow: 0 32px 96px rgba(0, 0, 0, 0.175);
}

.card + .card {
    margin-top: 50px;
}

.card-top {
    display: flex;
    justify-content: space-between;
    align-items: flex-start;
}

.card h2 {
    margin: 1px 0 0;
    color: #212529;
    font-size: 48px;
    line-height: 58px;
    font-weight: 700;
    letter-spacing: -1.150px;
}

.count {
    margin-top: -2px;
    color: #3a3f4a;
    font-size: 32px;
    line-height: 48px;
    letter-spacing: -0.650px;
}

.card p {
    margin: 26px 0 0 -2px;
    color: #343a4a;
    font-size: 32px;
    line-height: 48px;
    letter-spacing: -0.670px;
}

.card-actions {
    display: flex;
    gap: 32px;
    margin-top: 31px;
}

.btn-gray {
    width: 122px;
    background: #6c757d;
}

.btn-blue {
    width: 136px;
    background: #387bf7;
}

.btn-red {
    width: 146px;
    margin-left: auto;
    background: #ca3f4b;
}

/* dock */
.dock {
    display: flex;
    align-items: flex-start;
    width: 2818px;
    height: 96px;
    margin: 2px 0 0 62px;
    padding: 13px 0 0 11px;
    background: linear-gradient(90deg, #1f1d1b 0, #272b29 400px, #2b3f3c 700px, #203a3a 100%);
    border: 2px solid #4a5654;
    border-radius: 26px;
}

.dock-item {
    position: relative;
    width: 60px;
    margin-right: 17.080px;
}

.dock-item svg {
    width: 60px;
    height: 60px;
}

.dock-item svg.overflow {
    overflow: visible;
}

.dock-item.running::after {
    content: "";
    position: absolute;
    left: 26px;
    top: 68px;
    width: 8px;
    height: 8px;
    border-radius: 50%;
    background: #9fb0ae;
}

.dock-sep {
    width: 2px;
    height: 72px;
    margin: -3px 18px 0 7.500px;
    background: #5d6d6b;
}

.dock-thumb {
    position: relative;
    width: 70px;
    height: 64px;
    margin-right: 8px;
}

.thumb {
    width: 70px;
    height: 52px;
    margin-top: 4px;
}

.badge {
    position: absolute;
    right: 2px;
    top: 41px;
    width: 22px;
    height: 22px;
}

.dock-trash {
    width: 54px;
    margin: -6px 0 0 8px;
}

.dock-trash svg {
    width: 54px;
    height: 70px;
}

/* letters inside dock icons */
.ico-letter {
    fill: #fff;
    font: 700 18px "Liberation Sans", sans-serif;
    text-anchor: middle;
}

.ico-month {
    fill: #fff;
    font: 600 11px Inter, sans-serif;
    text-anchor: middle;
}

.ico-day {
    fill: #222;
    font: 300 36px Inter, sans-serif;
    text-anchor: middle;
}

.ico-zoom {
    fill: #fff;
    font: 600 16px Inter, sans-serif;
    text-anchor: middle;
}

.ico-pc {
    fill: #fff;
    font: 700 19px "Liberation Sans", sans-serif;
}

.ico-ce {
    fill: #fff;
    font: 700 13px "Liberation Sans", sans-serif;
    text-anchor: middle;
}
```
